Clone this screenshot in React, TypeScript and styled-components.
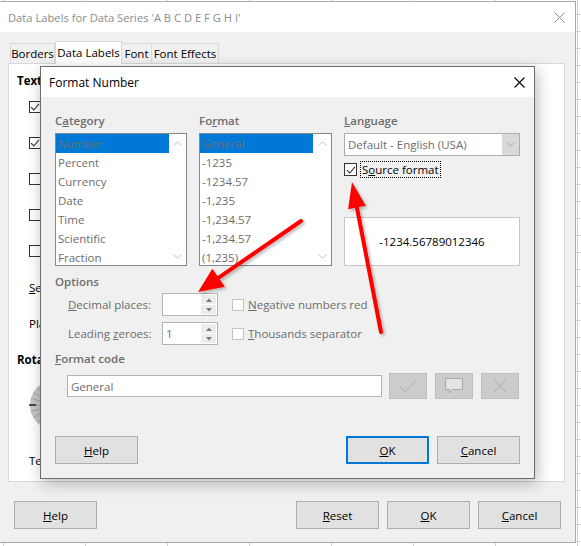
import React from 'react';
import styled, { createGlobalStyle } from 'styled-components';

const Global = createGlobalStyle`
  html, body { margin: 0; padding: 0; }
  body {
    width: 581px; height: 546px; overflow: hidden;
    font-family: "Open Sans", "Noto Sans", sans-serif;
    font-size: 11px;
    color: #000;
    background-color: #fff;
    background-image:
      linear-gradient(to right, #cfcfcf 1px, transparent 1px),
      linear-gradient(to bottom, #d6d6d6 1px, transparent 1px);
    background-size: 82px 100%, 100% 17px;
    background-position: 3px 0, 0 -3px;
  }
  #root { position: relative; width: 581px; height: 546px; }
`;

const Page = styled.div`
  position: relative;
  width: 581px;
  height: 546px;
  padding-top: 1px;
  box-sizing: border-box;
`;

/* ---------- outer dialog ---------- */
const OuterDialog = styled.div`
  width: 576px;
  height: 542px;
  box-sizing: border-box;
  background: #f0f0f0;
  border-top: 1px solid #a9a9a9;
  border-right: 1px solid #a9a9a9;
  border-bottom: 1px solid #a9a9a9;
  display: flex;
  flex-direction: column;
`;

const TitleBar = styled.div<{ $active?: boolean }>`
  height: 30px;
  flex: none;
  background: #fff;
  display: flex;
  align-items: center;
  justify-content: space-between;
  padding: 0 10px 0 8px;
  color: ${p => (p.$active ? '#000' : '#8c8c8c')};
  font-size: 11.2px;
`;

const CloseGlyph = styled.svg`
  display: block;
`;

const OuterBody = styled.div`
  flex: 1;
  display: flex;
  flex-direction: column;
  padding: 9px 10px 0 8px;
`;

const TabRow = styled.div`
  display: flex;
  align-items: flex-end;
  padding-left: 2px;
  margin-bottom: -1px;
  position: relative;
  z-index: 1;
`;

const Tab = styled.div<{ $w: number; $sel?: boolean }>`
  width: ${p => p.$w}px;
  height: ${p => (p.$sel ? 23 : 21)}px;
  box-sizing: border-box;
  border: 1px solid #d9d9d9;
  border-bottom: ${p => (p.$sel ? 'none' : '1px solid #d9d9d9')};
  margin-left: ${p => (p.$sel ? 0 : -1)}px;
  background: ${p => (p.$sel ? '#fff' : '#f0f0f0')};
  display: flex;
  align-items: center;
  justify-content: center;
  font-size: 11.5px;
  padding-bottom: ${p => (p.$sel ? 2 : 0)}px;
  &:first-child { margin-left: 0; }
`;

const TabPanel = styled.div`
  height: 419px;
  box-sizing: border-box;
  background: #fff;
  border: 1px solid #d9d9d9;
  display: flex;
  padding: 9px 0 0 8px;
`;

/* the part of the tab page that shows left of the Format Number dialog */
const PanelStrip = styled.div`
  width: 23px;
  overflow: hidden;
  display: flex;
  flex-direction: column;
`;

const SectionHead = styled.div`
  font-weight: 700;
  height: 16px;
  line-height: 16px;
  font-size: 11.5px;
  white-space: nowrap;
`;

const OuterRow = styled.div<{ $h?: number; $mt?: number }>`
  height: ${p => p.$h ?? 36}px;
  margin-top: ${p => p.$mt ?? 0}px;
  flex: none;
  display: flex;
  align-items: center;
  padding-left: 12px;
  white-space: nowrap;
  font-size: 11.5px;
`;

const OuterBold = styled(OuterRow)`
  padding-left: 0;
  font-weight: 700;
`;

const Dial = styled.svg`
  display: block;
  flex: none;
  margin: 2px 0 0 12px;
`;

const OuterFooter = styled.div`
  display: flex;
  gap: 8px;
  padding: 19px 4px 0 6px;
`;

const Spacer = styled.div`
  flex: 1;
`;

const Button = styled.div<{ $default?: boolean; $h?: number }>`
  width: 83px;
  height: ${p => p.$h ?? 28}px;
  box-sizing: border-box;
  background: #e1e1e1;
  border: ${p => (p.$default ? '2px solid #0078d7' : '1px solid #adadad')};
  display: flex;
  align-items: center;
  justify-content: center;
  font-size: 11.5px;
  color: #000;
`;

/* ---------- checkbox ---------- */
const Box = styled.div<{ $disabled?: boolean; $size?: number }>`
  width: ${p => p.$size ?? 12}px;
  height: ${p => p.$size ?? 12}px;
  box-sizing: border-box;
  flex: none;
  background: #fff;
  border: 1px solid ${p => (p.$disabled ? '#c4c4c4' : '#333')};
  display: flex;
  align-items: center;
  justify-content: center;
`;

const CheckBox = ({ checked, disabled, size }: { checked?: boolean; disabled?: boolean; size?: number }) => (
  <Box $disabled={disabled} $size={size}>
    {checked && (
      <svg width="10" height="10" viewBox="0 0 10 10">
        <path d="M1 5.2 L3.8 8 L9 1.8" fill="none" stroke="#333" strokeWidth="1.1" />
      </svg>
    )}
  </Box>
);

/* ---------- inner dialog ---------- */
const InnerDialog = styled.div`
  position: absolute;
  left: 40px;
  top: 66px;
  width: 495px;
  height: 413px;
  box-sizing: border-box;
  border: 1px solid #6b6b6b;
  background: #f0f0f0;
  box-shadow: 2px 4px 14px rgba(0, 0, 0, 0.28);
  display: flex;
  flex-direction: column;
  z-index: 2;
`;

const InnerTitle = styled(TitleBar)`
  padding: 0 9px 0 8px;
  height: 30px;
  font-size: 12px;
`;

const InnerBody = styled.div`
  flex: 1;
  display: flex;
  flex-direction: column;
  padding: 16px 14px 14px 14px;
`;

const TopRow = styled.div`
  display: flex;
  gap: 12px;
`;

const Column = styled.div<{ $w: number }>`
  width: ${p => p.$w}px;
  display: flex;
  flex-direction: column;
`;

const GroupLabel = styled.div<{ $dim?: boolean }>`
  height: 15px;
  line-height: 15px;
  font-weight: 600;
  font-size: 11.5px;
  color: ${p => (p.$dim ? '#6d6d6d' : '#000')};
  white-space: nowrap;
`;

const ListBox = styled.div<{ $w: number }>`
  margin-top: 5px;
  width: ${p => p.$w}px;
  height: 133px;
  box-sizing: border-box;
  border: 1px solid #828790;
  background: #fff;
  display: flex;
`;

const ListItems = styled.div`
  width: 113px;
  display: flex;
  flex-direction: column;
`;

const ListItem = styled.div<{ $sel?: boolean }>`
  height: 19px;
  line-height: 19px;
  padding-left: 2px;
  color: #6d6d6d;
  font-size: 11.5px;
  white-space: nowrap;
  background: ${p => (p.$sel ? '#0078d7' : 'transparent')};
`;

const ScrollTrack = styled.div`
  flex: 1;
  display: flex;
  flex-direction: column;
  justify-content: space-between;
  align-items: center;
  padding: 7px 0 6px;
`;

const Dropdown = styled.div`
  margin-top: 5px;
  height: 23px;
  box-sizing: border-box;
  border: 1px solid #adadad;
  background: #fff;
  display: flex;
  align-items: stretch;
`;

const DropText = styled.div`
  flex: 1;
  display: flex;
  align-items: center;
  padding-left: 3px;
  color: #6d6d6d;
  font-size: 11.5px;
`;

const DropButton = styled.div`
  width: 17px;
  background: #d9d9d9;
  display: flex;
  align-items: center;
  justify-content: center;
`;

const SourceRow = styled.div`
  display: flex;
  align-items: center;
  gap: 3px;
  margin-top: 5px;
  height: 17px;
`;

const FocusLabel = styled.div`
  border: 1px dotted #000;
  padding: 0 1px;
  line-height: 15px;
  font-size: 11.5px;
`;

const Preview = styled.div`
  margin-top: 39px;
  height: 49px;
  box-sizing: border-box;
  background: #fff;
  border: 1px solid #c6c6c6;
  display: flex;
  align-items: center;
  justify-content: center;
  font-size: 11.5px;
`;

const OptionsLabel = styled(GroupLabel)`
  margin-top: 8px;
`;

const OptionRow = styled.div<{ $mt: number }>`
  margin-top: ${p => p.$mt}px;
  display: flex;
  align-items: center;
  height: 23px;
  padding-left: 13px;
`;

const OptionName = styled.div`
  width: 94px;
  color: #6d6d6d;
  font-size: 11.5px;
  white-space: nowrap;
`;

const SpinBox = styled.div`
  width: 56px;
  height: 23px;
  box-sizing: border-box;
  border: 1px solid #b4b4b4;
  background: #fff;
  display: flex;
`;

const SpinValue = styled.div`
  flex: 1;
  display: flex;
  align-items: center;
  padding-left: 3px;
  color: #6d6d6d;
  font-size: 11.5px;
`;

const SpinButtons = styled.div`
  width: 15px;
  display: flex;
  flex-direction: column;
  gap: 1px;
  padding: 1px 1px 1px 0;
`;

const SpinHalf = styled.div`
  flex: 1;
  background: #ececec;
  display: flex;
  align-items: center;
  justify-content: center;
`;

const OptionCheck = styled.div`
  margin-left: 14px;
  display: flex;
  align-items: center;
  gap: 4px;
  color: #6d6d6d;
  font-size: 11.5px;
  white-space: nowrap;
`;

const CodeLabel = styled(GroupLabel)`
  margin-top: 6px;
`;

const CodeRow = styled.div`
  margin-top: 7px;
  display: flex;
  align-items: center;
  padding-left: 12px;
  gap: 8px;
`;

const CodeInput = styled.div`
  width: 315px;
  height: 22px;
  box-sizing: border-box;
  border: 1px solid #b4b4b4;
  background: #fff;
  display: flex;
  align-items: center;
  padding-left: 3px;
  color: #6d6d6d;
  font-size: 11.5px;
  margin-right: -1px;
`;

const IconButton = styled.div`
  width: 38px;
  height: 26px;
  box-sizing: border-box;
  background: #cccccc;
  border: 1px solid #bfbfbf;
  display: flex;
  align-items: center;
  justify-content: center;
`;

const InnerFooter = styled.div`
  margin-top: auto;
  display: flex;
  gap: 8px;
`;

const ArrowLayer = styled.svg`
  position: absolute;
  left: 0;
  top: 0;
  z-index: 3;
  pointer-events: none;
`;

const Tri = ({ up }: { up?: boolean }) => (
  <svg width="6" height="4" viewBox="0 0 6 4">
    <path d={up ? 'M0 4 L3 0.5 L6 4 Z' : 'M0 0 L3 3.5 L6 0 Z'} fill="#7a7a7a" />
  </svg>
);

const Chevron = ({ up }: { up?: boolean }) => (
  <svg width="9" height="5" viewBox="0 0 9 5">
    <path d={up ? 'M0.5 4.5 L4.5 0.8 L8.5 4.5' : 'M0.5 0.5 L4.5 4.2 L8.5 0.5'} fill="none" stroke="#c2c2c2" strokeWidth="1" />
  </svg>
);

const categories = ['Number', 'Percent', 'Currency', 'Date', 'Time', 'Scientific', 'Fraction'];
const formats = ['General', '-1235', '-1234.57', '-1,235', '-1,234.57', '-1,234.57', '(1,235)'];

const List = ({ items, w }: { items: string[]; w: number }) => (
  <ListBox $w={w}>
    <ListItems>
      {items.map((t, i) => (
        <ListItem key={i} $sel={i === 0}>{t}</ListItem>
      ))}
    </ListItems>
    <ScrollTrack>
      <Chevron up />
      <Chevron />
    </ScrollTrack>
  </ListBox>
);

const Spin = ({ value }: { value: string }) => (
  <SpinBox>
    <SpinValue>{value}</SpinValue>
    <SpinButtons>
      <SpinHalf><Tri up /></SpinHalf>
      <SpinHalf><Tri /></SpinHalf>
    </SpinButtons>
  </SpinBox>
);

const Arrow = ({ x1, y1, tx, ty, len, half }: { x1: number; y1: number; tx: number; ty: number; len: number; half: number }) => {
  const dx = tx - x1;
  const dy = ty - y1;
  const d = Math.hypot(dx, dy);
  const ux = dx / d;
  const uy = dy / d;
  const bx = tx - ux * len;
  const by = ty - uy * len;
  const px = -uy;
  const py = ux;
  const pts = `${tx},${ty} ${bx + px * half},${by + py * half} ${bx - px * half},${by - py * half}`;
  return (
    <g>
      <line x1={x1} y1={y1} x2={bx + ux * 2} y2={by + uy * 2} stroke="#ff0000" strokeWidth="4" strokeLinecap="round" />
      <polygon points={pts} fill="#ff0000" />
    </g>
  );
};

export default function App() {
  return (
    <Page>
      <Global />
      <OuterDialog>
        <TitleBar>
          <span>Data Labels for Data Series 'A B C D E F G H I'</span>
          <CloseGlyph width="11" height="11" viewBox="0 0 11 11">
            <path d="M0.5 0.5 L10.5 10.5 M10.5 0.5 L0.5 10.5" stroke="#8c8c8c" strokeWidth="1" />
          </CloseGlyph>
        </TitleBar>
        <OuterBody>
          <TabRow>
            <Tab $w={45}>Borders</Tab>
            <Tab $w={67} $sel>Data Labels</Tab>
            <Tab $w={31}>Font</Tab>
            <Tab $w={68}>Font Effects</Tab>
          </TabRow>
          <TabPanel>
            <PanelStrip>
              <SectionHead>Text</SectionHead>
              <OuterRow><CheckBox checked /></OuterRow>
              <OuterRow><CheckBox checked /></OuterRow>
              <OuterRow><CheckBox /></OuterRow>
              <OuterRow><CheckBox /></OuterRow>
              <OuterRow><CheckBox /></OuterRow>
              <OuterRow><span><u>S</u>e</span></OuterRow>
              <OuterRow><span>Pla</span></OuterRow>
              <OuterBold>Rota</OuterBold>
              <Dial width="52" height="52" viewBox="0 0 52 52">
                <circle cx="26" cy="26" r="25" fill="#c6c6c6" />
                <circle cx="26" cy="26" r="13" fill="#e2e2e2" />
                {Array.from({ length: 24 }).map((_, i) => {
                  const a = (i * Math.PI * 2) / 24;
                  return (
                    <line key={i} x1={26 + Math.cos(a) * 14} y1={26 + Math.sin(a) * 14} x2={26 + Math.cos(a) * 25} y2={26 + Math.sin(a) * 25} stroke="#9a9a9a" strokeWidth="0.8" />
                  );
                })}
                <line x1="0" y1="26" x2="7" y2="26" stroke="#000" strokeWidth="1.2" />
              </Dial>
              <OuterRow $h={16} $mt={21}>Te</OuterRow>
            </PanelStrip>
          </TabPanel>
          <OuterFooter>
            <Button><span><u>H</u>elp</span></Button>
            <Spacer />
            <Button><span><u>R</u>eset</span></Button>
            <Button><span><u>O</u>K</span></Button>
            <Button><span><u>C</u>ancel</span></Button>
          </OuterFooter>
        </OuterBody>
      </OuterDialog>

      <InnerDialog>
        <InnerTitle $active>
          <span>Format Number</span>
          <CloseGlyph width="11" height="11" viewBox="0 0 11 11">
            <path d="M0.5 0.5 L10.5 10.5 M10.5 0.5 L0.5 10.5" stroke="#000" strokeWidth="1.1" />
          </CloseGlyph>
        </InnerTitle>
        <InnerBody>
          <TopRow>
            <Column $w={132}>
              <GroupLabel $dim>C<u>a</u>tegory</GroupLabel>
              <List items={categories} w={132} />
            </Column>
            <Column $w={133}>
              <GroupLabel $dim>Fo<u>r</u>mat</GroupLabel>
              <List items={formats} w={133} />
            </Column>
            <Column $w={177}>
              <GroupLabel $dim><u>L</u>anguage</GroupLabel>
              <Dropdown>
                <DropText>Default - English (USA)</DropText>
                <DropButton>
                  <svg width="9" height="5" viewBox="0 0 9 5">
                    <path d="M0.5 0.5 L4.5 4.2 L8.5 0.5" fill="none" stroke="#a8a8a8" strokeWidth="1" />
                  </svg>
                </DropButton>
              </Dropdown>
              <SourceRow>
                <CheckBox checked size={13} />
                <FocusLabel>S<u>o</u>urce format</FocusLabel>
              </SourceRow>
              <Preview>-1234.56789012346</Preview>
            </Column>
          </TopRow>

          <OptionsLabel $dim>Options</OptionsLabel>
          <OptionRow $mt={4}>
            <OptionName><u>D</u>ecimal places:</OptionName>
            <Spin value="" />
            <OptionCheck>
              <CheckBox disabled />
              <span><u>N</u>egative numbers red</span>
            </OptionCheck>
          </OptionRow>
          <OptionRow $mt={6}>
            <OptionName>Leading <u>z</u>eroes:</OptionName>
            <Spin value="1" />
            <OptionCheck>
              <CheckBox disabled />
              <span><u>T</u>housands separator</span>
            </OptionCheck>
          </OptionRow>

          <CodeLabel $dim><u>F</u>ormat code</CodeLabel>
          <CodeRow>
            <CodeInput>General</CodeInput>
            <IconButton>
              <svg width="18" height="14" viewBox="0 0 18 14">
                <path d="M1 7.5 L6 12.5 L17 1.5" fill="none" stroke="#b9b9b9" strokeWidth="1.3" />
              </svg>
            </IconButton>
            <IconButton>
              <svg width="20" height="18" viewBox="0 0 20 18">
                <path d="M1.5 1.5 H18.5 V12.5 H8.5 L5.5 16 V12.5 H1.5 Z" fill="#e4e4e4" stroke="#a8a8a8" strokeWidth="1" />
              </svg>
            </IconButton>
            <IconButton>
              <svg width="14" height="14" viewBox="0 0 14 14">
                <path d="M1 1 L13 13 M13 1 L1 13" fill="none" stroke="#b9b9b9" strokeWidth="1.3" />
              </svg>
            </IconButton>
          </CodeRow>

          <InnerFooter>
            <Button><span><u>H</u>elp</span></Button>
            <Spacer />
            <Button $default><span><u>O</u>K</span></Button>
            <Button><span><u>C</u>ancel</span></Button>
          </InnerFooter>
        </InnerBody>
      </InnerDialog>

      <ArrowLayer width="581" height="546" viewBox="0 0 581 546">
        <defs>
          <filter id="sh" x="-20%" y="-20%" width="140%" height="140%">
            <feDropShadow dx="2" dy="2" stdDeviation="1.5" floodColor="#000" floodOpacity="0.25" />
          </filter>
        </defs>
        <g filter="url(#sh)">
          <Arrow x1={301} y1={221} tx={198} ty={292} len={25} half={11} />
          <Arrow x1={381} y1={332} tx={352} ty={182} len={26} half={9} />
        </g>
      </ArrowLayer>
    </Page>
  );
}
